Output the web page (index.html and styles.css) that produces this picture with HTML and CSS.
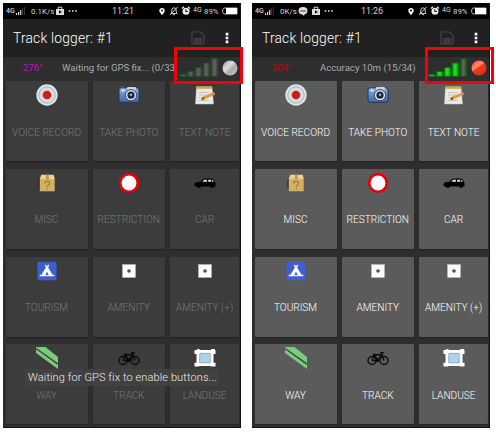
FILE: index.html
```
<!DOCTYPE html>
<html lang="en">
<head>
<meta charset="utf-8">
<title>Track logger</title>
<link rel="stylesheet" href="styles.css">
</head>
<body>
<svg class="defs" width="0" height="0" aria-hidden="true">
  <defs>
    <linearGradient id="silver" x1="0" y1="0" x2="1" y2="1"><stop offset="0" stop-color="#999"/><stop offset=".4" stop-color="#ddd"/><stop offset=".6" stop-color="#aaa"/><stop offset="1" stop-color="#ccc"/></linearGradient>
    <linearGradient id="red" x1="0" y1="0" x2=".7" y2="1"><stop offset="0" stop-color="#f04a30"/><stop offset=".45" stop-color="#ff8a70"/><stop offset=".55" stop-color="#f03a20"/><stop offset="1" stop-color="#e02c18"/></linearGradient>
    <linearGradient id="blue" x1="0" y1="0" x2="0" y2="1"><stop offset="0" stop-color="#8fb0e0"/><stop offset="1" stop-color="#3f65a5"/></linearGradient>
    <linearGradient id="bar" x1="0" y1="0" x2="1" y2="0"><stop offset="0" stop-color="#3a3d3a"/><stop offset=".5" stop-color="#626562"/><stop offset="1" stop-color="#3a3d3a"/></linearGradient>
    <linearGradient id="lit" x1="0" y1="0" x2="1" y2="0"><stop offset="0" stop-color="#07b507"/><stop offset=".5" stop-color="#22dd22"/><stop offset="1" stop-color="#07a507"/></linearGradient>
  </defs>
  <symbol id="voice" viewBox="0 0 22 22"><circle cx="11" cy="11" r="10.7" fill="#dfe5e8"/><circle cx="11" cy="11" r="8.2" fill="#d3dde2" stroke="#a9b4ba" stroke-width="1"/><circle cx="11" cy="11" r="4.3" fill="#cf1d12"/></symbol>
  <symbol id="photo" viewBox="0 0 22 22"><rect x="2.5" y="2.5" width="4" height="3" fill="#4b6fac"/><rect x="1" y="3.8" width="20" height="14.5" rx="2.2" fill="url(#blue)" stroke="#21365f"/><rect x="9" y="3" width="9" height="3" rx="1" fill="#c5d5ec"/><rect x="3.5" y="5.5" width="3" height="2" fill="#dfe9f6"/><circle cx="13" cy="11.2" r="5.6" fill="#e5e9ef" stroke="#31456b"/><circle cx="13" cy="11.2" r="3.6" fill="#18243b"/><circle cx="13" cy="10.8" r="1.4" fill="#8fa7c8"/></symbol>
  <symbol id="note" viewBox="0 0 22 22"><path d="M2.5 3H18l1.5 17H1.5z" fill="#e9e9e4" stroke="#c9c9c2" stroke-width=".5"/><path d="M2.3 2.2H18v2.6H2.3z" fill="#c7a943"/><path d="M5 8.5h10M5 11h8M4.8 13.5h4M4.8 16.5h10" stroke="#bbb" stroke-width=".8"/><path d="M7 15.8l2.2-3.4L20 8l1 2.6L10.3 15.4z" fill="#e39b3c"/><path d="M7 15.8l2.2-3.4 1.1 3z" fill="#6b4b28"/><path d="M18.5 8.6L20 8l1 2.6-1.5.7z" fill="#d9837b"/></symbol>
  <symbol id="misc" viewBox="0 0 22 22"><path d="M2 8l2-1v11l-2-3z" fill="#222" opacity=".5"/><path d="M5.2 2.8h12.5l1 4.2H3.8z" fill="#eed295"/><path d="M3.8 7h14.9v12.3H3.8z" fill="#d3b064"/><path d="M10 2.8h2.5L13 7H9.7z" fill="#bf974a"/><path d="M8.6 11.5c.2-3.2 5.2-3 5 0-.1 1.9-2.3 1.8-2.3 3.6M11.3 16.2v1.3" fill="none" stroke="#a07f3e" stroke-width="1.3"/></symbol>
  <symbol id="restriction" viewBox="0 0 22 22"><circle cx="11" cy="11" r="8.8" fill="#fff" stroke="#e8000b" stroke-width="2.7"/></symbol>
  <symbol id="car" viewBox="0 0 22 22"><path d="M.5 12.5c.2-2.3 3-2.6 6-2.8L9 7c3-.8 8-.8 10.5-.1L21.5 11v3.3l-2 .3H2.2L.5 14z" fill="#000"/><circle cx="5" cy="14" r="2.1"/><circle cx="18" cy="14" r="2.1"/><path d="M8.3 9.8l1.8-2h3v2zM14.2 7.8h3v2h-3zM18.2 7.8h.8l.8 2h-1.6z" fill="#ddd"/></symbol>
  <symbol id="tourism" viewBox="0 0 22 22"><rect x="1.5" y="1.7" width="19" height="18.5" rx="1.8" fill="#3d5fd2"/><path d="M9.5 4.5l1.5 1.8 1.5-1.8.8.7-1.2 2.3 4.4 7.3h1.8v1.5H3.7v-1.5h1.8l4.4-7.3-1.2-2.3z" fill="#fff"/><path d="M11 11.5l1.7 3.8H9.3z" fill="#3d5fd2"/></symbol>
  <symbol id="amenity" viewBox="0 0 22 22"><rect x="4.6" y="4.6" width="12.8" height="12.8" fill="#fff" stroke="#ccc" stroke-width=".5"/><circle cx="11" cy="11" r="1.8" fill="#8e3a40"/><circle cx="11" cy="11" r=".7" fill="#444"/></symbol>
  <symbol id="way" viewBox="0 0 22 22"><path d="M0 0h9.5L22 10v12L0 6z" fill="#7cca7c"/><path d="M0 1.5l22 15.6" stroke="#3c443c" stroke-width="1.4"/></symbol>
  <symbol id="track" viewBox="0 0 22 22"><g fill="none" stroke="#0b0b0b" stroke-width="1.4"><circle cx="5" cy="13.5" r="4"/><circle cx="17" cy="13.5" r="4"/><path d="M5 13.5l2.5-5.7h7L10.5 13.5H5M7.8 8l2.7 5.5M17 13.5L14 5.8h2.8M5.8 7.5h3.5"/></g><circle cx="10.5" cy="13.5" r="1.6"/></symbol>
  <symbol id="landuse" viewBox="0 0 22 22"><path d="M4 4.6h14v13H4z" fill="#add2f0" stroke="#fff" stroke-width="3"/><path d="M5.7 6.3h10.6v9.6H5.7z" fill="none" stroke="#807f78" stroke-width=".5"/><path d="M.5 3h4.8v4H.5zM16.7 3h4.8v4h-4.8zM.5 15.8h4.8v3.7H.5zM16.7 15.8h4.8v3.7h-4.8zM3 2h2.5v2H3zM17 2h4v2h-4z" fill="#fff"/></symbol>
  <symbol id="pin" viewBox="0 0 8 10"><path d="M4 9.2L1.2 5.2A3 3 0 1 1 6.8 5.2z" fill="#fff"/><circle cx="4" cy="3.8" r="1.1"/></symbol>
  <symbol id="mute" viewBox="0 0 10 10"><path d="M2 7.5h6L7.2 6V4A2.2 2.2 0 0 0 2.8 4v2zM4 8.7h2M1 9L8.8.8" fill="none" stroke="#ddd" stroke-width=".9"/></symbol>
  <symbol id="alarm" viewBox="0 0 10 10"><circle cx="5" cy="5.2" r="3.5" fill="#eee"/><path d="M1 2.5l2-1.7M9 2.5L7 .8" stroke="#eee" stroke-width="1.4"/><path d="M4.8 3.2v2.3h2" fill="none" stroke="#000"/></symbol>
  <symbol id="bag" viewBox="0 0 10 10"><path d="M1 3h8v6H1z" fill="#ddd"/><path d="M3.2 3V1.2h3.6V3" fill="none" stroke="#ddd"/><path d="M4 4.2l3 1.8-3 1.8z" fill="#111"/></symbol>
  <symbol id="signal" viewBox="0 0 9 8"><path d="M.5 6v2M2.6 5v3M4.7 3v5" stroke="#ddd" stroke-width="1.2"/><path d="M6.6 1v7M8.4 0v8" stroke="#555" stroke-width=".7"/></symbol>
  <symbol id="chat" viewBox="0 0 10 10"><ellipse cx="5" cy="4.8" rx="4.5" ry="3.7" fill="#ddd"/><path d="M4 8l2 2 1-3z" fill="#ddd"/><path d="M2.3 5h5.5" stroke="#555" stroke-width="1.2"/></symbol>
  <symbol id="dots" viewBox="0 0 10 4"><g fill="#ccc"><circle cx="1.5" cy="2" r=".9"/><circle cx="4.8" cy="2" r=".9"/><circle cx="8.1" cy="2" r=".9"/></g></symbol>
  <symbol id="battery" viewBox="0 0 16 8"><path d="M2 1h13v6H2L.7 5.3V2.7z" fill="none" stroke="#ccc" stroke-width=".9"/><path d="M4 1h11v6H4z" fill="#fff"/></symbol>
  <symbol id="save" viewBox="0 0 14 14"><path d="M1 1h8.5L13 4.5V13H1z" fill="none" stroke="#444" stroke-width="1.2"/><path d="M3.3 7h7.4v5.5H3.3z" fill="#444"/><path d="M4.5 9h5M4.5 11h5" stroke="#252525" stroke-width=".7"/></symbol>
  <symbol id="menu" viewBox="0 0 4 12"><path d="M.7.8h2.6v2.6H.7zM.7 4.7h2.6v2.6H.7zM.7 8.6h2.6v2.6H.7z" fill="#fff"/></symbol>
</svg>

<main class="screens">
  <section class="phone waiting">
    <header class="status">
      <span class="net">4G</span><svg class="sig"><use href="#signal"/></svg><span class="rate">0.1K/s</span><svg class="i9"><use href="#bag"/></svg><svg class="more"><use href="#dots"/></svg>
      <span class="clock">11:21</span>
      <svg class="pin"><use href="#pin"/></svg><svg class="i9"><use href="#mute"/></svg><svg class="i9"><use href="#alarm"/></svg><span class="lte">4G</span><span class="pct">89%</span><svg class="batt"><use href="#battery"/></svg>
    </header>
    <div class="title"><h1>Track logger: #1</h1><svg class="save"><use href="#save"/></svg><svg class="menu"><use href="#menu"/></svg></div>
    <div class="info"><span class="heading">276°</span><span class="fix">Waiting for GPS fix... (0/33</span>
      <div class="gps"><svg width="40" height="20" viewBox="0 0 40 20"><g fill="url(#bar)" stroke="#126012" stroke-width="1"><path d="M1 16.3h6v2H1z"/><path d="M8.7 13.5h6v4.8h-6z"/><path d="M16.5 9.5h6v8.8h-6z"/><path d="M24.3 5h6v13.3h-6z"/><path d="M32.3.8h6.4v17.5h-6.4z"/></g></svg><svg width="16" height="16" viewBox="0 0 16 16"><circle cx="8" cy="8" r="7.5" fill="url(#silver)"/></svg></div>
    </div>
    <div class="grid">
      <div class="tile"><svg><use href="#voice"/></svg><span>VOICE RECORD</span></div>
      <div class="tile"><svg><use href="#photo"/></svg><span>TAKE PHOTO</span></div>
      <div class="tile"><svg><use href="#note"/></svg><span>TEXT NOTE</span></div>
      <div class="tile"><svg><use href="#misc"/></svg><span>MISC</span></div>
      <div class="tile"><svg><use href="#restriction"/></svg><span>RESTRICTION</span></div>
      <div class="tile"><svg><use href="#car"/></svg><span>CAR</span></div>
      <div class="tile"><svg><use href="#tourism"/></svg><span>TOURISM</span></div>
      <div class="tile"><svg><use href="#amenity"/></svg><span>AMENITY</span></div>
      <div class="tile"><svg><use href="#amenity"/></svg><span>AMENITY (+)</span></div>
      <div class="tile"><svg><use href="#way"/></svg><span>WAY</span></div>
      <div class="tile"><svg><use href="#track"/></svg><span>TRACK</span></div>
      <div class="tile"><svg><use href="#landuse"/></svg><span>LANDUSE</span></div>
    </div>
    <div class="callout"></div>
    <div class="toast">Waiting for GPS fix to enable buttons...</div>
  </section>

  <section class="phone ready">
    <header class="status">
      <span class="net">4G</span><svg class="sig"><use href="#signal"/></svg><span class="rate">0K/s</span><svg class="i9"><use href="#chat"/></svg><svg class="i9 gap"><use href="#bag"/></svg><svg class="more"><use href="#dots"/></svg>
      <span class="clock">11:26</span>
      <svg class="pin"><use href="#pin"/></svg><svg class="i9"><use href="#mute"/></svg><svg class="i9"><use href="#alarm"/></svg><span class="lte">4G</span><span class="pct">89%</span><svg class="batt"><use href="#battery"/></svg>
    </header>
    <div class="title"><h1>Track logger: #1</h1><svg class="save"><use href="#save"/></svg><svg class="menu"><use href="#menu"/></svg></div>
    <div class="info"><span class="heading">304°</span><span class="fix">Accuracy 10m (15/34)</span>
      <div class="gps"><svg width="40" height="20" viewBox="0 0 40 20"><g fill="url(#lit)" stroke="#087808" stroke-width="1"><path d="M1 16.3h6v2H1z"/><path d="M8.7 13.5h6v4.8h-6z"/><path d="M16.5 9.5h6v8.8h-6z"/><path d="M24.3 5h6v13.3h-6z"/><path d="M32.3.8h6.4v17.5h-6.4z" fill="url(#bar)" stroke="#126012"/></g></svg><svg width="16" height="16" viewBox="0 0 16 16"><circle cx="8" cy="8" r="7.5" fill="url(#red)"/></svg></div>
    </div>
    <div class="grid">
      <div class="tile"><svg><use href="#voice"/></svg><span>VOICE RECORD</span></div>
      <div class="tile"><svg><use href="#photo"/></svg><span>TAKE PHOTO</span></div>
      <div class="tile"><svg><use href="#note"/></svg><span>TEXT NOTE</span></div>
      <div class="tile"><svg><use href="#misc"/></svg><span>MISC</span></div>
      <div class="tile"><svg><use href="#restriction"/></svg><span>RESTRICTION</span></div>
      <div class="tile"><svg><use href="#car"/></svg><span>CAR</span></div>
      <div class="tile"><svg><use href="#tourism"/></svg><span>TOURISM</span></div>
      <div class="tile"><svg><use href="#amenity"/></svg><span>AMENITY</span></div>
      <div class="tile"><svg><use href="#amenity"/></svg><span>AMENITY (+)</span></div>
      <div class="tile"><svg><use href="#way"/></svg><span>WAY</span></div>
      <div class="tile"><svg><use href="#track"/></svg><span>TRACK</span></div>
      <div class="tile"><svg><use href="#landuse"/></svg><span>LANDUSE</span></div>
    </div>
    <div class="callout"></div>
  </section>
</main>
</body>
</html>
```
FILE: styles.css
```
* { box-sizing: border-box; }
body { margin: 0; background: #fff; font-family: Roboto, "Liberation Sans", sans-serif; overflow: hidden; }
svg { display: block; flex: none; }
.defs { position: absolute; }
.screens { display: flex; gap: 11px; padding: 3px 0 0 3px; width: 496px; height: 432px; }
.phone { position: relative; flex: none; width: 238px; height: 425px; background: #2e2e2e; border-right: 1px solid #141414; border-bottom: 1px solid #141414; }

.status { display: flex; align-items: center; height: 16px; background: #000; color: #d4d4d4; font-size: 8px; white-space: nowrap; padding: 0 2px 0 3px; }
.net { width: 10px; font-size: 7px; font-weight: 500; }
.sig { width: 9px; height: 8px; }
.rate { margin-left: 6px; width: 24px; font-size: 7.9px; }
.ready .rate { width: 18px; }
.i9 { width: 10px; height: 10px; margin-right: 2px; }
.gap { margin-left: 1px; }
.more { width: 10px; height: 4px; margin-left: 1px; }
.clock { margin-left: auto; margin-right: 19px; width: 27px; font-size: 8.8px; }
.pin { width: 8px; height: 9px; margin-right: 3px; }
.lte { font-size: 7px; width: 11px; margin-bottom: 2px; }
.pct { width: 18px; font-size: 7.9px; }
.batt { width: 16px; height: 8px; }

.title { display: flex; align-items: center; height: 38px; background: #212121; padding-left: 10px; }
.title h1 { margin: 0; flex: 1; font-size: 13.8px; font-weight: 300; color: #fff; letter-spacing: .2px; }
.save { width: 14px; height: 14px; margin-right: 20px; }
.menu { width: 4px; height: 12px; margin-right: 11px; }

.info { display: flex; align-items: center; height: 21px; color: #aaa; font-size: 9.6px; white-space: nowrap; }
.heading { width: 39px; margin-left: 20px; }
.waiting .heading { color: #c313c3; }
.ready .heading { color: #b90c0c; width: 48px; }
.gps { display: flex; align-items: center; gap: 3px; margin-left: auto; margin-right: 2px; }

.grid { display: grid; grid-template-columns: 82px 72px 69px; grid-auto-rows: 80px; gap: 7.8px 5.3px; padding: 3px 0 0 2.5px; }
.tile { display: flex; flex-direction: column; align-items: center; padding-top: 3px; background: #3c3c3c; border-radius: 1px; color: #7a7a7a; font-size: 10.1px; font-weight: 300; line-height: 12px; white-space: nowrap; box-shadow: 0 1px 1px #242424; }
.tile svg { width: 22px; height: 22px; }
.tile span { margin-top: 20.5px; }
.ready .tile { background: #5b5b5c; color: #fff; }

.callout { position: absolute; left: 171px; top: 44px; width: 69px; height: 37px; border: 3px solid #f5000a; }
.ready .callout { left: 173px; }
.toast { position: absolute; left: 22px; top: 366px; width: 194px; height: 17px; padding-left: 3px; background: rgba(66, 66, 66, .93); border-radius: 2px; color: #eee; font-size: 11px; font-weight: 300; letter-spacing: .11px; line-height: 17px; white-space: nowrap; }
```
